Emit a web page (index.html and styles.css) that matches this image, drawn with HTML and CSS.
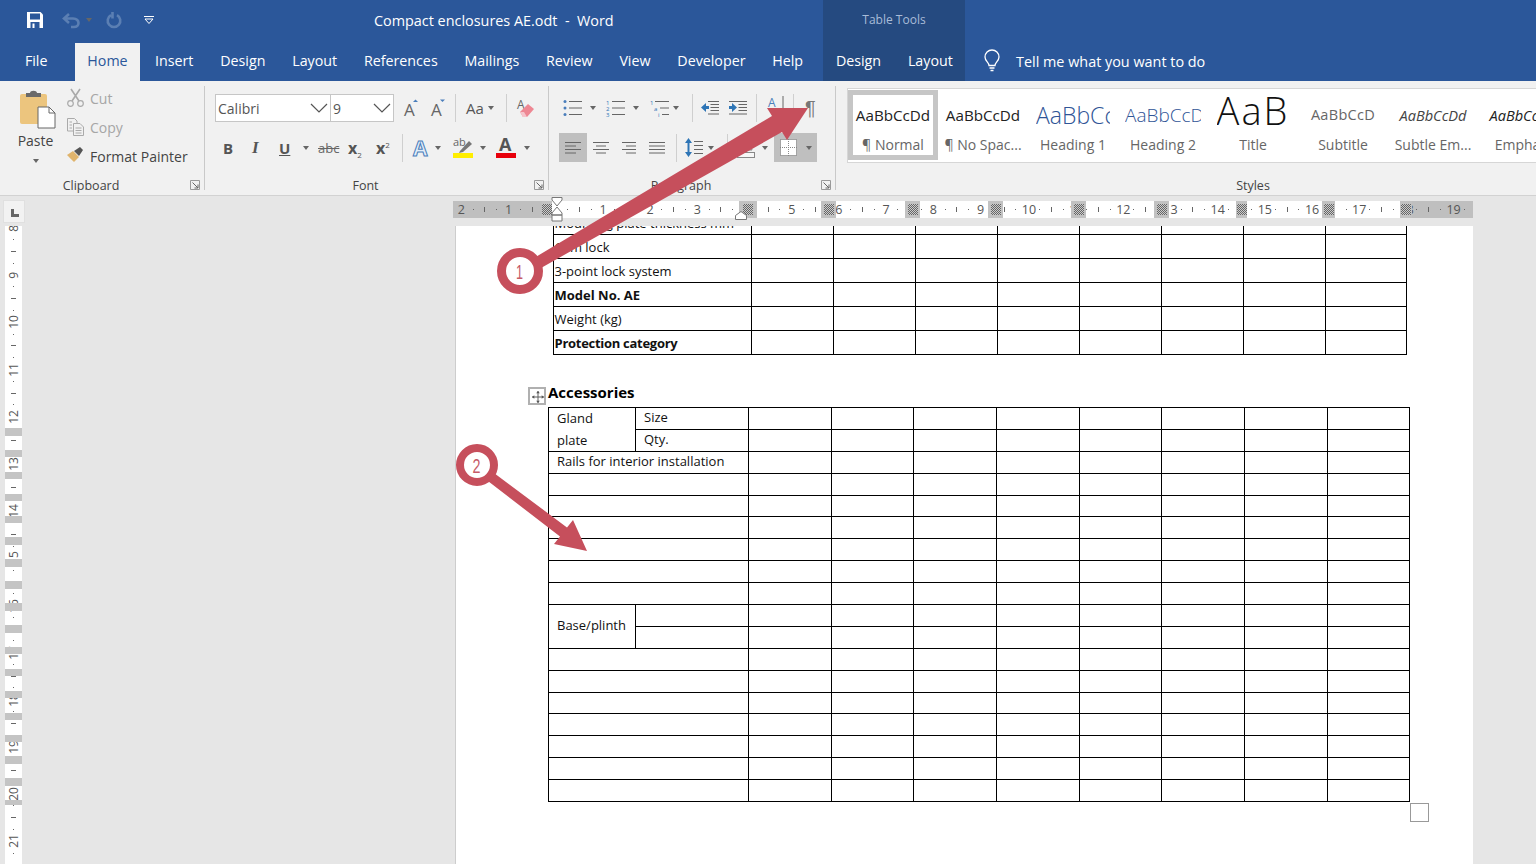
FILE: index.html
```html
<!DOCTYPE html>
<html lang="en">
<head>
<meta charset="utf-8">
<title>Compact enclosures AE.odt - Word</title>
<link rel="stylesheet" href="styles.css">
</head>
<body>
<header class="header">
  <div class="hd-main">
    <div class="qat">
      <svg class="q-save" width="16" height="16" viewBox="0 0 16 16"><path d="M0 0H13.5L16 2.5V16H0Z" fill="#fff"/><rect x="3" y="1.5" width="10" height="6" fill="#2b579a"/><rect x="3.5" y="10" width="9" height="6" fill="#2b579a"/><rect x="5.5" y="11.5" width="2" height="4.5" fill="#fff"/></svg>
      <svg class="q-undo" width="18" height="15" viewBox="0 0 18 15"><path d="M7 1L2 5.5L7 10M2.5 5.5H11C15 5.5 16.5 8 16.5 10S15 14 12 14H9" fill="none" stroke="#5b7fb3" stroke-width="2.6"/></svg>
      <i class="caret q-caret"></i>
      <svg class="q-redo" width="16" height="17" viewBox="0 0 16 17"><path d="M11 3.2A6.3 6.3 0 1 1 5 3.2M6.5 0V6.5" fill="none" stroke="#5b7fb3" stroke-width="2.6"/></svg>
      <svg class="q-more" width="10" height="8" viewBox="0 0 10 8"><path d="M0 .5H10" stroke="#fff"/><path d="M1 3L5 7.5L9 3Z" fill="none" stroke="#fff"/></svg>
      <span class="doc-title">Compact enclosures AE.odt &nbsp;-&nbsp; Word</span>
    </div>
    <nav class="tabs">
      <span class="tab tab-file">File</span>
      <span class="tab tab-home">Home</span>
      <span class="tab">Insert</span>
      <span class="tab">Design</span>
      <span class="tab">Layout</span>
      <span class="tab">References</span>
      <span class="tab">Mailings</span>
      <span class="tab">Review</span>
      <span class="tab">View</span>
      <span class="tab">Developer</span>
      <span class="tab">Help</span>
    </nav>
  </div>
  <div class="hd-ctx">
    <div class="ctx-title">Table Tools</div>
    <nav class="tabs ctx-tabs">
      <span class="tab">Design</span>
      <span class="tab">Layout</span>
    </nav>
  </div>
  <div class="hd-rest">
    <div class="tell">
      <svg width="16" height="22" viewBox="0 0 16 22"><path d="M5 15.5C5 12.5 1 11 1 7A7 7 0 0 1 15 7C15 11 11 12.5 11 15.5Z" fill="none" stroke="#fff" stroke-width="1.3"/><path d="M5.5 18H10.5M6.5 20.5H9.5" stroke="#fff" stroke-width="1.4"/></svg>
      <span>Tell me what you want to do</span>
    </div>
  </div>
</header>

<section class="ribbon">
  <div class="group g-clip">
    <div class="clip-body">
      <div class="paste">
        <svg width="36" height="39" viewBox="0 0 36 39"><rect x="0" y="4" width="27" height="30" rx="2" fill="#ecc57e"/><path d="M6 7V3H10C10 0 17 0 17 3H21V7Z" fill="#6a6a6a"/><path d="M18 17H29L35 23V38H18Z" fill="#fff" stroke="#666"/><path d="M29 17V23H35" fill="none" stroke="#666"/></svg>
        <span class="paste-t">Paste</span>
        <i class="caret"></i>
      </div>
      <div class="clip-list">
        <div class="clip-item off"><svg width="17" height="18" viewBox="0 0 17 18"><circle cx="3.5" cy="14.5" r="2.8" fill="none" stroke="#aaa" stroke-width="1.2"/><circle cx="13.5" cy="14.5" r="2.8" fill="none" stroke="#aaa" stroke-width="1.2"/><path d="M5 12L13 0M12 12L4 0" stroke="#aaa" stroke-width="1.6"/></svg><span>Cut</span></div>
        <div class="clip-item off"><svg width="17" height="18" viewBox="0 0 17 18"><path d="M.5 .5H7.5L10 3V13H.5Z" fill="none" stroke="#aaa"/><path d="M6.5 5.5H13L16.5 9V17.5H6.5Z" fill="#f1f1f1" stroke="#aaa"/><path d="M8.5 10H14.5M8.5 12.5H14.5M8.5 15H14.5M2.5 4H5M2.5 7H5M2.5 10H5" stroke="#aaa"/></svg><span>Copy</span></div>
        <div class="clip-item"><svg width="17" height="18" viewBox="0 0 17 18"><path d="M0 8L6 4L12 10L7 15C4 12 2 10 0 8Z" fill="#e0b46c"/><path d="M7 4L13 0L16 3L12 9Z" fill="#555"/></svg><span>Format Painter</span></div>
      </div>
    </div>
    <div class="glabel"><span class="gname">Clipboard</span><svg class="launcher" width="10" height="10" viewBox="0 0 10 10"><path d="M.5 .5H9.5V9.5H.5Z" fill="none" stroke="#999"/><path d="M2.5 2.5L8 8M8 4.5V8H4.5" fill="none" stroke="#666"/></svg></div>
  </div>
  <i class="gsep"></i>

  <div class="group g-font">
    <div class="rows">
      <div class="row f-r1">
        <div class="combo c-font"><span>Calibri</span><svg width="18" height="10" viewBox="0 0 18 10"><path d="M1 1L9 9L17 1" fill="none" stroke="#555" stroke-width="1.2"/></svg></div>
        <div class="combo c-size"><span>9</span><svg width="18" height="10" viewBox="0 0 18 10"><path d="M1 1L9 9L17 1" fill="none" stroke="#555" stroke-width="1.2"/></svg></div>
        <svg width="14" height="18" viewBox="0 0 14 18"><text x="0" y="17" class="ig-a">A</text><path d="M9 3L11.5 .5L14 3Z" fill="#4a7ebb"/></svg>
        <svg width="14" height="18" viewBox="0 0 14 18"><text x="0" y="17" class="ig-a">A</text><path d="M9 .5L11.5 3L14 .5Z" fill="#4a7ebb"/></svg>
        <i class="vsep"></i>
        <span class="t-aa">Aa</span>
        <i class="caret"></i>
        <i class="vsep"></i>
        <svg width="18" height="20" viewBox="0 0 18 20"><text x="0" y="11" class="ig-b">A</text><path d="M3 14L11 6L17 11L10 19H6Z" fill="#ee8793"/><path d="M3 14L6 19H10L7 14Z" fill="#f6c4cb"/></svg>
      </div>
      <div class="row f-r2">
        <b class="t-b">B</b>
        <b class="t-i">I</b>
        <b class="t-u">U</b>
        <i class="caret"></i>
        <span class="t-abc">abc</span>
        <span class="t-x">x<sub>2</sub></span>
        <span class="t-x">x<sup>2</sup></span>
        <i class="vsep"></i>
        <svg width="18" height="20" viewBox="0 0 18 20"><text x="0" y="18" class="ig-fx">A</text></svg>
        <i class="caret"></i>
        <svg width="20" height="21" viewBox="0 0 20 21"><text x="0" y="9" class="ig-c">ab</text><path d="M7 14L16 4L19 7L10 15L6 16Z" fill="#777"/><rect x="0" y="16" width="20" height="5" fill="#ffee00"/></svg>
        <i class="caret"></i>
        <svg width="20" height="21" viewBox="0 0 20 21"><text x="3" y="14" class="ig-d">A</text><rect x="0" y="16" width="20" height="5" fill="#e8000b"/></svg>
        <i class="caret"></i>
      </div>
    </div>
    <div class="glabel"><span class="gname">Font</span><svg class="launcher" width="10" height="10" viewBox="0 0 10 10"><path d="M.5 .5H9.5V9.5H.5Z" fill="none" stroke="#999"/><path d="M2.5 2.5L8 8M8 4.5V8H4.5" fill="none" stroke="#666"/></svg></div>
  </div>
  <i class="gsep"></i>

  <div class="group g-para">
    <div class="rows">
      <div class="row p-r1">
        <svg width="19" height="18" viewBox="0 0 19 18"><g fill="#4a7ebb"><circle cx="2" cy="2.5" r="1.5"/><circle cx="2" cy="9" r="1.5"/><circle cx="2" cy="15.5" r="1.5"/></g><path d="M6 2.5H19M6 9H19M6 15.5H19" stroke="#666"/></svg>
        <i class="caret"></i>
        <svg width="19" height="18" viewBox="0 0 19 18"><g class="ig-n"><text x="0" y="6">1</text><text x="0" y="12">2</text><text x="0" y="18">3</text></g><path d="M6 2.5H19M6 9H19M6 15.5H19" stroke="#666"/></svg>
        <i class="caret"></i>
        <svg width="19" height="18" viewBox="0 0 19 18"><g class="ig-n"><text x="0" y="6">1</text><text x="4" y="12">a</text><text x="8" y="18">i</text></g><path d="M5 2.5H19M10 9H19M12 15.5H19" stroke="#666"/></svg>
        <i class="caret"></i>
        <i class="vsep"></i>
        <svg width="18" height="14" viewBox="0 0 18 14"><path d="M7 .5H18M9.5 3.5H18M9.5 6.5H18M9.5 9.5H18M7 13H18" stroke="#666"/><path d="M0 6.5L5 2V5H8V8H5V11Z" fill="#2e75b6"/></svg>
        <svg width="18" height="14" viewBox="0 0 18 14"><path d="M0 .5H18M9.5 3.5H18M9.5 6.5H18M9.5 9.5H18M0 13H18" stroke="#666"/><path d="M8 6.5L3 2V5H0V8H3V11Z" fill="#2e75b6"/></svg>
        <i class="vsep"></i>
        <svg width="18" height="24" viewBox="0 0 18 24"><text x="0" y="11" class="ig-s">A</text><path d="M15 0V22" stroke="#666"/></svg>
        <i class="vsep"></i>
        <span class="t-pil">¶</span>
      </div>
      <div class="row p-r2">
        <div class="hl hl-left"><svg width="16" height="12" viewBox="0 0 16 12"><path d="M0 .5H16M0 4H11M0 7.5H16M0 11H11" stroke="#666"/></svg></div>
        <svg width="16" height="12" viewBox="0 0 16 12"><path d="M0 .5H16M3 4H13M0 7.5H16M3 11H13" stroke="#666"/></svg>
        <svg width="14" height="12" viewBox="0 0 14 12"><path d="M0 .5H14M4 4H14M0 7.5H14M4 11H14" stroke="#666"/></svg>
        <svg width="16" height="12" viewBox="0 0 16 12"><path d="M0 .5H16M0 4H16M0 7.5H16M0 11H16" stroke="#666"/></svg>
        <i class="vsep"></i>
        <svg width="18" height="19" viewBox="0 0 18 19"><path d="M3.5 0L7 5H0ZM3.5 19L7 14H0Z" fill="#2e75b6"/><path d="M3.5 4V15" stroke="#2e75b6" stroke-width="2"/><path d="M9 3.5H18M9 7.5H18M9 11.5H18M9 15.5H18" stroke="#666"/></svg>
        <i class="caret"></i>
        <i class="vsep"></i>
        <svg width="18" height="20" viewBox="0 0 18 20"><path d="M2 2L12 2L15 12H2Z" fill="#e8e8e8" stroke="#888"/><rect x=".5" y="14.5" width="17" height="5" fill="#f7f7f7" stroke="#888"/></svg>
        <i class="caret"></i>
        <div class="hl hl-border"><svg width="17" height="17" viewBox="0 0 17 17"><rect x=".5" y=".5" width="16" height="16" fill="#fff" stroke="#666" stroke-dasharray="1 1"/><path d="M8.5 0V17M0 8.5H17" stroke="#888" stroke-dasharray="1 1"/></svg><i class="caret"></i></div>
      </div>
    </div>
    <div class="glabel"><span class="gname">Paragraph</span><svg class="launcher" width="10" height="10" viewBox="0 0 10 10"><path d="M.5 .5H9.5V9.5H.5Z" fill="none" stroke="#999"/><path d="M2.5 2.5L8 8M8 4.5V8H4.5" fill="none" stroke="#666"/></svg></div>
  </div>
  <i class="gsep"></i>

  <div class="group g-styles">
    <div class="gallery">
      <div class="style st-on"><span class="pv">AaBbCcDd</span><span class="nm">¶ Normal</span></div>
      <div class="style"><span class="pv">AaBbCcDd</span><span class="nm">¶ No Spac...</span></div>
      <div class="style"><span class="pv pv-h1">AaBbCc</span><span class="nm">Heading 1</span></div>
      <div class="style"><span class="pv pv-h2">AaBbCcD</span><span class="nm">Heading 2</span></div>
      <div class="style"><span class="pv pv-t">AaB</span><span class="nm">Title</span></div>
      <div class="style"><span class="pv pv-sub">AaBbCcD</span><span class="nm">Subtitle</span></div>
      <div class="style"><span class="pv pv-se">AaBbCcDd</span><span class="nm">Subtle Em...</span></div>
      <div class="style"><span class="pv pv-em">AaBbCcDd</span><span class="nm">Empha...</span></div>
    </div>
    <div class="glabel"><span class="gname">Styles</span></div>
  </div>
</section>

<main class="workspace">
  <aside class="side">
    <div class="corner"><i class="corner-l"></i></div>
    <div class="vruler">
      <div class="v-scale">
        <div class="vc"><span>8</span><i class="d"></i><i class="t"></i><i class="d"></i></div>
        <div class="vc"><span>9</span><i class="d"></i><i class="t"></i><i class="d"></i></div>
        <div class="vc"><span>10</span><i class="d"></i><i class="t"></i><i class="d"></i></div>
        <div class="vc"><span>11</span><i class="d"></i><i class="t"></i><i class="d"></i></div>
        <div class="vc"><span>12</span><i class="d"></i><i class="t"></i><i class="d"></i></div>
        <div class="vc"><span>13</span><i class="d"></i><i class="t"></i><i class="d"></i></div>
        <div class="vc"><span>14</span><i class="d"></i><i class="t"></i><i class="d"></i></div>
        <div class="vc"><span>15</span><i class="d"></i><i class="t"></i><i class="d"></i></div>
        <div class="vc"><span>16</span><i class="d"></i><i class="t"></i><i class="d"></i></div>
        <div class="vc"><span>17</span><i class="d"></i><i class="t"></i><i class="d"></i></div>
        <div class="vc"><span>18</span><i class="d"></i><i class="t"></i><i class="d"></i></div>
        <div class="vc"><span>19</span><i class="d"></i><i class="t"></i><i class="d"></i></div>
        <div class="vc"><span>20</span><i class="d"></i><i class="t"></i><i class="d"></i></div>
        <div class="vc"><span>21</span><i class="d"></i><i class="t"></i><i class="d"></i></div>
      </div>
      <div class="v-bars"></div>
    </div>
  </aside>
  <div class="docarea">
    <div class="hruler">
      <div class="h-scale">
        <div class="hc"><span>2</span><i class="d"></i><i class="t"></i><i class="d"></i></div>
        <div class="hc"><span>1</span><i class="d"></i><i class="t"></i><i class="d"></i></div>
        <div class="hc"><span></span><i class="d"></i><i class="t"></i><i class="d"></i></div>
        <div class="hc"><span>1</span><i class="d"></i><i class="t"></i><i class="d"></i></div>
        <div class="hc"><span>2</span><i class="d"></i><i class="t"></i><i class="d"></i></div>
        <div class="hc"><span>3</span><i class="d"></i><i class="t"></i><i class="d"></i></div>
        <div class="hc"><span>4</span><i class="d"></i><i class="t"></i><i class="d"></i></div>
        <div class="hc"><span>5</span><i class="d"></i><i class="t"></i><i class="d"></i></div>
        <div class="hc"><span>6</span><i class="d"></i><i class="t"></i><i class="d"></i></div>
        <div class="hc"><span>7</span><i class="d"></i><i class="t"></i><i class="d"></i></div>
        <div class="hc"><span>8</span><i class="d"></i><i class="t"></i><i class="d"></i></div>
        <div class="hc"><span>9</span><i class="d"></i><i class="t"></i><i class="d"></i></div>
        <div class="hc"><span>10</span><i class="d"></i><i class="t"></i><i class="d"></i></div>
        <div class="hc"><span>11</span><i class="d"></i><i class="t"></i><i class="d"></i></div>
        <div class="hc"><span>12</span><i class="d"></i><i class="t"></i><i class="d"></i></div>
        <div class="hc"><span>13</span><i class="d"></i><i class="t"></i><i class="d"></i></div>
        <div class="hc"><span>14</span><i class="d"></i><i class="t"></i><i class="d"></i></div>
        <div class="hc"><span>15</span><i class="d"></i><i class="t"></i><i class="d"></i></div>
        <div class="hc"><span>16</span><i class="d"></i><i class="t"></i><i class="d"></i></div>
        <div class="hc"><span>17</span><i class="d"></i><i class="t"></i><i class="d"></i></div>
        <div class="hc"><span>18</span><i class="d"></i><i class="t"></i><i class="d"></i></div>
        <div class="hc"><span>19</span><i class="d"></i></div>
      </div>
      <div class="h-marks">
        <i></i><b class="mk-edge"></b><i></i><b></b><i></i><b></b><i></i><b></b><i></i><b></b><i></i><b></b><i></i><b></b><i></i><b></b><i></i><b></b><i></i><b class="mk-edge"></b>
      </div>
      <svg class="indent-first" width="12" height="29" viewBox="0 0 12 29"><path d="M1 .5H11V3L6 9L1 3ZM6 10L11 16V18H1V16ZM1 18H11V24H1Z" fill="#fff" stroke="#777"/></svg>
      <svg class="indent-right" width="12" height="9" viewBox="0 0 12 9"><path d="M.5 8.5V4.5L6 .5L11.5 4.5V8.5Z" fill="#fff" stroke="#777"/></svg>
    </div>
    <div class="page">
      <table class="t1">
        <colgroup><col class="c198"><col class="c82"><col class="c82"><col class="c82"><col class="c82"><col class="c82"><col class="c82"><col class="c82"><col class="c81"></colgroup>
        <tr><td>Mounting plate thickness mm</td><td></td><td></td><td></td><td></td><td></td><td></td><td></td><td></td></tr>
        <tr><td>Cam lock</td><td></td><td></td><td></td><td></td><td></td><td></td><td></td><td></td></tr>
        <tr><td>3-point lock system</td><td></td><td></td><td></td><td></td><td></td><td></td><td></td><td></td></tr>
        <tr><td><b>Model No. AE</b></td><td></td><td></td><td></td><td></td><td></td><td></td><td></td><td></td></tr>
        <tr><td>Weight (kg)</td><td></td><td></td><td></td><td></td><td></td><td></td><td></td><td></td></tr>
        <tr><td><b class="tight">Protection category</b></td><td></td><td></td><td></td><td></td><td></td><td></td><td></td><td></td></tr>
      </table>
      <div class="acc-head">
        <div class="move"><svg width="13" height="13" viewBox="0 0 13 13"><path d="M6.5 0V13M0 6.5H13" stroke="#555"/><path d="M6.5 0L4.5 2.5H8.5ZM6.5 13L4.5 10.5H8.5ZM0 6.5L2.5 4.5V8.5ZM13 6.5L10.5 4.5V8.5Z" fill="#555"/></svg></div>
        <strong>Accessories</strong>
      </div>
      <table class="t2">
        <colgroup><col class="c87"><col class="c113"><col class="c83"><col class="c82"><col class="c83"><col class="c83"><col class="c82"><col class="c83"><col class="c83"><col class="c82"></colgroup>
        <tr><td rowspan="2" class="gland">Gland<br>plate</td><td>Size</td><td></td><td></td><td></td><td></td><td></td><td></td><td></td><td></td></tr>
        <tr><td>Qty.</td><td></td><td></td><td></td><td></td><td></td><td></td><td></td><td></td></tr>
        <tr><td colspan="2">Rails for interior installation</td><td></td><td></td><td></td><td></td><td></td><td></td><td></td><td></td></tr>
        <tr><td colspan="2"></td><td></td><td></td><td></td><td></td><td></td><td></td><td></td><td></td></tr>
        <tr class="short"><td colspan="2"></td><td></td><td></td><td></td><td></td><td></td><td></td><td></td><td></td></tr>
        <tr><td colspan="2"></td><td></td><td></td><td></td><td></td><td></td><td></td><td></td><td></td></tr>
        <tr><td colspan="2"></td><td></td><td></td><td></td><td></td><td></td><td></td><td></td><td></td></tr>
        <tr><td colspan="2"></td><td></td><td></td><td></td><td></td><td></td><td></td><td></td><td></td></tr>
        <tr><td colspan="2"></td><td></td><td></td><td></td><td></td><td></td><td></td><td></td><td></td></tr>
        <tr><td rowspan="2">Base/plinth</td><td></td><td></td><td></td><td></td><td></td><td></td><td></td><td></td><td></td></tr>
        <tr><td></td><td></td><td></td><td></td><td></td><td></td><td></td><td></td><td></td></tr>
        <tr><td colspan="2"></td><td></td><td></td><td></td><td></td><td></td><td></td><td></td><td></td></tr>
        <tr><td colspan="2"></td><td></td><td></td><td></td><td></td><td></td><td></td><td></td><td></td></tr>
        <tr class="short"><td colspan="2"></td><td></td><td></td><td></td><td></td><td></td><td></td><td></td><td></td></tr>
        <tr><td colspan="2"></td><td></td><td></td><td></td><td></td><td></td><td></td><td></td><td></td></tr>
        <tr><td colspan="2"></td><td></td><td></td><td></td><td></td><td></td><td></td><td></td><td></td></tr>
        <tr><td colspan="2"></td><td></td><td></td><td></td><td></td><td></td><td></td><td></td><td></td></tr>
        <tr><td colspan="2"></td><td></td><td></td><td></td><td></td><td></td><td></td><td></td><td></td></tr>
      </table>
      <div class="end-mark"></div>
    </div>
  </div>
</main>

<svg class="notes" width="1536" height="864" viewBox="0 0 1536 864">
  <g fill="#c64f5c">
    <path d="M534 258L772 116L767 108L808 108L787 140L782 132L541 268Z"/>
    <path d="M490 470L567 527.5L573 520L587 551L554 544L560 536.5L484 478Z"/>
  </g>
  <circle cx="520" cy="271" r="18.5" fill="#fff" stroke="#c64f5c" stroke-width="9"/>
  <circle cx="477" cy="465" r="17" fill="#fff" stroke="#c64f5c" stroke-width="8"/>
  <text x="519.5" y="279" class="note-n" textLength="7" lengthAdjust="spacingAndGlyphs">1</text>
  <text x="476.5" y="473" class="note-n" textLength="8" lengthAdjust="spacingAndGlyphs">2</text>
</svg>
</body>
</html>
```

FILE: styles.css
```css
* { box-sizing: border-box; }
html, body { margin: 0; padding: 0; }
body {
  width: 1536px;
  height: 864px;
  overflow: hidden;
  position: relative;
  display: flex;
  flex-direction: column;
  background: #e6e6e6;
  font-family: "Open Sans", "Liberation Sans", sans-serif;
  font-size: 14px;
  color: #444;
}
svg { display: block; overflow: visible; }
i, b { display: block; }

/* title bar and tabs */
.header { display: flex; height: 81px; background: #2b579a; color: #fff; flex: none; }
.hd-main { width: 823px; flex: none; }
.hd-ctx { width: 142px; flex: none; background: #254a80; }
.hd-rest { flex: 1; padding-top: 43px; }
.qat { height: 43px; padding-bottom: 3px; display: flex; align-items: center; }
.q-save { margin-left: 27px; }
.q-undo { margin-left: 19px; }
.q-caret { margin-left: 6px; border-top-color: #5b7fb3; }
.q-redo { margin-left: 14px; }
.q-more { margin-left: 22px; }
.doc-title { margin-left: 220px; font-size: 14.4px; color: #fff; white-space: nowrap; }
.tabs { display: flex; height: 38px; padding-left: 11.5px; }
.tab { padding: 0 13.4px; line-height: 36px; font-size: 14.25px; white-space: nowrap; }
.tab-home { margin: 0 2px 0 14.5px; padding: 0 12px; background: #f1f1f1; color: #2b579a; }
.ctx-title { height: 43px; line-height: 40px; text-align: center; font-size: 12px; color: #a9bcd8; }
.ctx-tabs { padding-left: 0; margin-left: -.5px; }
.tell { display: flex; align-items: center; gap: 16px; height: 36px; padding-left: 19px; font-size: 14.4px; }

/* ribbon */
.ribbon { display: flex; height: 115px; flex: none; background: #f1f1f1; border-bottom: 1px solid #d2d2d2; overflow: hidden; }
.group { display: flex; flex-direction: column; height: 114px; flex: none; }
.gsep { width: 1px; height: 104px; margin-top: 5px; background: #c9c9c9; flex: none; }
.g-clip { width: 204px; }
.g-font { width: 343px; }
.g-para { width: 286px; }
.g-styles { width: 834px; }
.glabel { display: flex; align-items: center; height: 18px; margin-top: auto; margin-bottom: 1px; font-size: 12.5px; color: #444; }
.gname { flex: 1; text-align: center; }
.launcher { margin: 0 4px 0 8px; }

.clip-body { display: flex; height: 95px; }
.paste { width: 63px; margin-left: 4px; padding-top: 9px; display: flex; flex-direction: column; align-items: center; }
.paste svg { margin-left: 4px; }
.paste-t { margin-top: 2px; font-size: 14px; line-height: 20px; }
.paste .caret { margin-top: 8px; }
.clip-list { padding-top: 8px; display: flex; flex-direction: column; gap: 11px; }
.clip-item { display: flex; align-items: center; gap: 6px; height: 18px; font-size: 14px; white-space: nowrap; }
.clip-item.off { color: #a6a6a6; }

.rows { display: flex; flex-direction: column; gap: 11px; padding-top: 13px; }
.row { display: grid; align-items: center; justify-items: start; height: 28px; }
.f-r1 { margin-left: 10px; grid-template-columns: 115px 74px 27px 24px 11px 22px 18px 11px auto; }
.f-r2 { margin-left: 18px; height: 29px; grid-template-columns: 29px 27px 24px 15px 30px 28px 26px 11px 22px 18px 27px 16px 28px auto; }
.p-r1 { margin-left: 14px; grid-template-columns: 27px 16px 27px 17px 23px 19px 9px 28px 27px 12px 25px 12px auto; }
.p-r2 { margin-left: 10px; height: 29px; grid-template-columns: 34px 29px 27px 27px 9px 23px 19px 10px 25px 12px auto; }

.caret { width: 0; height: 0; border: 3.5px solid transparent; border-top: 4px solid #666; border-bottom: 0; }
.vsep { width: 1px; height: 28px; background: #cfcfcf; }
.combo { display: flex; align-items: center; justify-content: space-between; height: 28px; padding: 0 2px 0 2px; background: #fff; border: 1px solid #c6c6c6; font-size: 14px; color: #555; }
.c-font { width: 116px; }
.c-size { width: 64px; }
.t-aa { font-size: 15px; color: #555; }
.t-b, .t-i, .t-u { font-size: 15px; color: #555; font-weight: 700; }
.t-i { font-style: italic; font-family: "Liberation Serif", serif; font-size: 17px; }
.t-u { text-decoration: underline; }
.t-abc { font-size: 13px; color: #666; text-decoration: line-through; }
.t-x { font-size: 16px; font-weight: 700; color: #555; line-height: 20px; }
.t-x sub, .t-x sup { font-size: 8px; font-weight: 400; line-height: 0; }
.t-pil { font-size: 20px; line-height: 20px; color: #777; font-family: "Liberation Sans", sans-serif; }
.hl { display: flex; align-items: center; height: 29px; background: #bfbfbf; }
.hl-left { width: 28px; justify-content: center; }
.hl-border { width: 43px; padding-left: 6px; gap: 9px; }
.ig-a { font: 17px "Open Sans", sans-serif; fill: #666; }
.ig-b { font: 12px "Open Sans", sans-serif; fill: #666; }
.ig-c { font: 11px "Open Sans", sans-serif; fill: #666; }
.ig-d { font: 700 18px "Open Sans", sans-serif; fill: #555; }
.ig-s { font: 12px "Open Sans", sans-serif; fill: #4a7ebb; }
.ig-fx { font: 700 21px "Open Sans", sans-serif; fill: #e4eef9; stroke: #4a7ebb; stroke-width: 1; }
.ig-n { font: 6px "Open Sans", sans-serif; fill: #2e75b6; }

.gallery { display: flex; width: 700px; height: 75px; margin: 7px 0 0 11px; padding-top: 1px; background: #fff; border: 1px solid #d6d6d6; border-right: 0; }
.style { display: flex; flex-direction: column; align-items: center; width: 90px; height: 70px; flex: none; overflow: hidden; padding-top: 6px; white-space: nowrap; }
.st-on { border: 5px solid #c6c6c6; padding-top: 1px; }
.pv { height: 37px; line-height: 38px; font-size: 15.2px; color: #222; }
.nm { font-size: 14px; line-height: 20px; margin-top: 2px; color: #666; }
.pv-h1 { font-size: 23px; color: #2f5496; width: 74px; overflow: hidden; font-weight: 300; }
.pv-h2 { font-size: 19px; color: #2f5496; width: 76px; overflow: hidden; font-weight: 300; }
.pv-t { height: 30px; margin: 1px 0 6px; overflow: hidden; font-size: 38px; letter-spacing: 2px; line-height: 26px; color: #111; font-weight: 300; }
.pv-sub { color: #666; letter-spacing: .3px; font-size: 14.5px; }
.pv-se { font-style: italic; color: #444; font-size: 14.6px; }
.pv-em { font-style: italic; color: #222; font-size: 14.6px; }

/* workspace */
.workspace { flex: 1; display: flex; min-height: 0; background: #e6e6e6; }
.side { width: 453px; flex: none; padding-top: 4px; }
.corner { width: 22px; height: 23px; margin-left: 3px; padding: 8px 0 0 7px; background: #f2f2f2; border: 1px solid #e0e0e0; }
.corner-l { width: 8px; height: 8px; border-left: 3px solid #666; border-bottom: 3px solid #666; }
.vruler { position: relative; width: 17px; height: 638px; margin: 3px 0 0 5px; background: #fff; overflow: hidden; }
.v-scale { margin-top: -4px; font-size: 12px; color: #555; }
.vc { height: 47.2px; display: flex; flex-direction: column; align-items: center; }
.vc > * { flex: none; }
.vc span { height: 11.8px; line-height: 12px; writing-mode: vertical-rl; transform: rotate(180deg); display: flex; align-items: center; justify-content: center; white-space: nowrap; }
.vc .d, .vc .t { height: 11.8px; width: 4px; background: linear-gradient(#666, #666) center / 1px 1px no-repeat; }
.vc .t { background-size: 5px 1px; width: 6px; }
.v-bars { position: absolute; left: 0; right: 0; top: 202px; height: 377px; background: repeating-linear-gradient(#c4c4c4 0 7.5px, transparent 7.5px 21.9px); }

.docarea { width: 1020px; flex: none; padding-top: 5px; }
.hruler { position: relative; height: 17px; background: linear-gradient(90deg, #bfbfbf 99px, #fff 99px, #fff 947px, #bfbfbf 947px); font-size: 12.5px; color: #555; }
.h-scale { display: flex; height: 17px; margin-left: 2.5px; width: 1017.5px; overflow: hidden; }
.hc { width: 47.2px; flex: none; display: flex; align-items: center; }
.hc > * { flex: none; width: 11.8px; text-align: center; }
.hc .d, .hc .t { height: 17px; background: linear-gradient(#666, #666) center / 1px 1px no-repeat; }
.hc .t { background-size: 1px 5px; }
.h-marks { position: absolute; left: 0; top: 0; height: 17px; display: grid; grid-template-columns: 89px 10px 187px 18px 64px 15px 69px 15px 68px 15px 68px 15px 68px 15px 67px 11px 75px 13px 65px 12px; }
.h-marks b { background: #c2c2c2; }
.h-marks b::after { content: ""; display: block; width: 10px; height: 11px; margin: 3px auto 0; background: conic-gradient(#666 25%, #ccc 0 50%, #666 0 75%, #ccc 0) 0 0 / 2px 2px; }
.indent-first { position: absolute; left: 98px; top: -4px; }
.indent-right { position: absolute; left: 282px; top: 10px; }

.page { width: 1018px; height: 638px; margin: 8px 0 0 2px; background: #fff; border-left: 1px solid #cdcdcd; overflow: hidden; font-size: 13px; color: #111; }
table { border-collapse: collapse; table-layout: fixed; }
td { padding: 0 1px; border: 1px solid #000; overflow: hidden; white-space: nowrap; line-height: 20px; }
.tight { letter-spacing: -.28px; }
.t1 { width: 853px; margin: -16px 0 0 96.5px; }
.t1 tr { height: 24px; }
.t2 { width: 861px; margin-left: 92px; }
.t2 tr { height: 22px; }
.t2 tr.short { height: 21px; }
.t2 td { padding: 0 0 2px 8px; line-height: 19px; }
.t2 .gland { padding-bottom: 0; line-height: 21.5px; }
.c198 { width: 198px; } .c82 { width: 82px; } .c81 { width: 81px; }
.c87 { width: 87px; } .c113 { width: 113px; } .c83 { width: 83px; }
.acc-head { display: flex; align-items: flex-start; gap: 2px; height: 21px; margin: 31px 0 0 72px; font-size: 15px; color: #000; }
.acc-head strong { line-height: 13px; }
.move { width: 18px; height: 18px; margin-top: 1px; padding: 2px; background: #fff; border: 2px solid #b0b0b0; }
.move svg { width: 12px; height: 12px; }
.end-mark { width: 19px; height: 19px; margin: 1px 0 0 954px; border: 1px solid #999; }

/* callouts drawn over the screenshot */
.notes { position: absolute; left: 0; top: 0; }
.note-n { font: 21px "Liberation Sans", sans-serif; fill: #c65a67; text-anchor: middle; }
```
